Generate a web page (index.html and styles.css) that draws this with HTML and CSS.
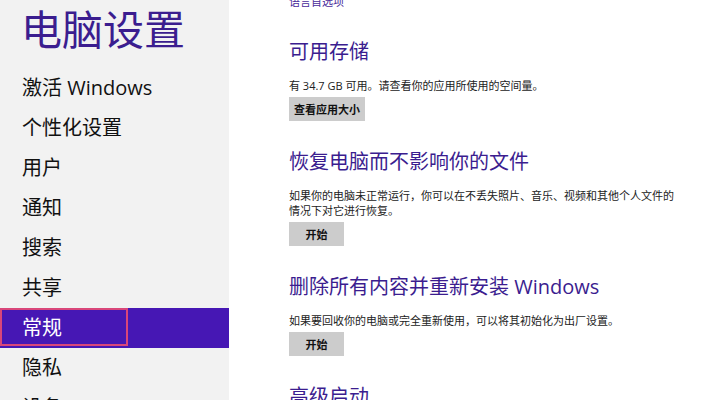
FILE: index.html
```html
<!DOCTYPE html>
<html lang="zh-CN">
<head>
  <meta charset="UTF-8" />
  <title>电脑设置</title>
  <link rel="stylesheet" href="styles.css">
</head>
<body>
  <div class="screen">
    <div class="sidebar">
      <h1 class="title">电脑设置</h1>
      <ul class="nav">
        <li class="nav-item">激活 Windows</li>
        <li class="nav-item">个性化设置</li>
        <li class="nav-item">用户</li>
        <li class="nav-item">通知</li>
        <li class="nav-item">搜索</li>
        <li class="nav-item">共享</li>
        <li class="nav-item active">常规<span class="mark"></span></li>
        <li class="nav-item">隐私</li>
        <li class="nav-item">设备</li>
      </ul>
    </div>

    <div class="content">
      <a class="link">语言首选项</a>

      <div class="section">
        <h2>可用存储</h2>
        <p>有 34.7 GB 可用。请查看你的应用所使用的空间量。</p>
        <button>查看应用大小</button>
      </div>

      <div class="section">
        <h2>恢复电脑而不影响你的文件</h2>
        <p>如果你的电脑未正常运行，你可以在不丢失照片、音乐、视频和其他个人文件的情况下对它进行恢复。</p>
        <button>开始</button>
      </div>

      <div class="section">
        <h2>删除所有内容并重新安装 Windows</h2>
        <p>如果要回收你的电脑或完全重新使用，可以将其初始化为出厂设置。</p>
        <button>开始</button>
      </div>

      <div class="section">
        <h2>高级启动</h2>
      </div>
    </div>
  </div>
</body>
</html>
```

FILE: styles.css
```css
body {
  margin: 0;
  font-family: "Open Sans", "Noto Sans CJK SC", sans-serif;
  background: #fff;
  overflow: hidden;
}
.screen {
  display: flex;
  height: 400px;
  overflow: hidden;
}
.sidebar {
  width: 229px;
  flex-shrink: 0;
  background: #f2f2f2;
  padding-top: 5px;
}
.title {
  margin: 0 0 15px 0;
  padding-left: 21px;
  font-size: 41px;
  line-height: 48px;
  font-weight: normal;
  color: #3b1d8f;
}
.nav {
  list-style: none;
  margin: 0;
  padding: 0;
}
.nav-item {
  position: relative;
  height: 40px;
  line-height: 40px;
  padding-left: 22px;
  font-size: 20px;
  color: #111;
}
.nav-item.active {
  background: #4617b4;
  color: #fff;
}
.mark {
  position: absolute;
  left: 0;
  top: 0;
  width: 124px;
  height: 34px;
  border: 2px solid #d9467a;
}
.content {
  padding-left: 60px;
  width: 394px;
}
.link {
  display: block;
  margin-top: -6px;
  font-size: 11px;
  line-height: 15px;
  color: #4a2b9a;
}
.section {
  margin-top: 29px;
}
.section + .section {
  margin-top: 27px;
}
h2 {
  margin: 0;
  font-size: 20px;
  line-height: 28px;
  font-weight: normal;
  color: #3b1d8f;
  white-space: nowrap;
}
p {
  margin: 12px 0 4px 0;
  font-size: 11px;
  line-height: 15px;
  color: #222;
  word-break: break-all;
}
button {
  display: block;
  height: 24px;
  min-width: 55px;
  padding: 0 5px;
  border: none;
  background: #cccccc;
  font-family: inherit;
  font-size: 11px;
  font-weight: bold;
  color: #111;
}
```
